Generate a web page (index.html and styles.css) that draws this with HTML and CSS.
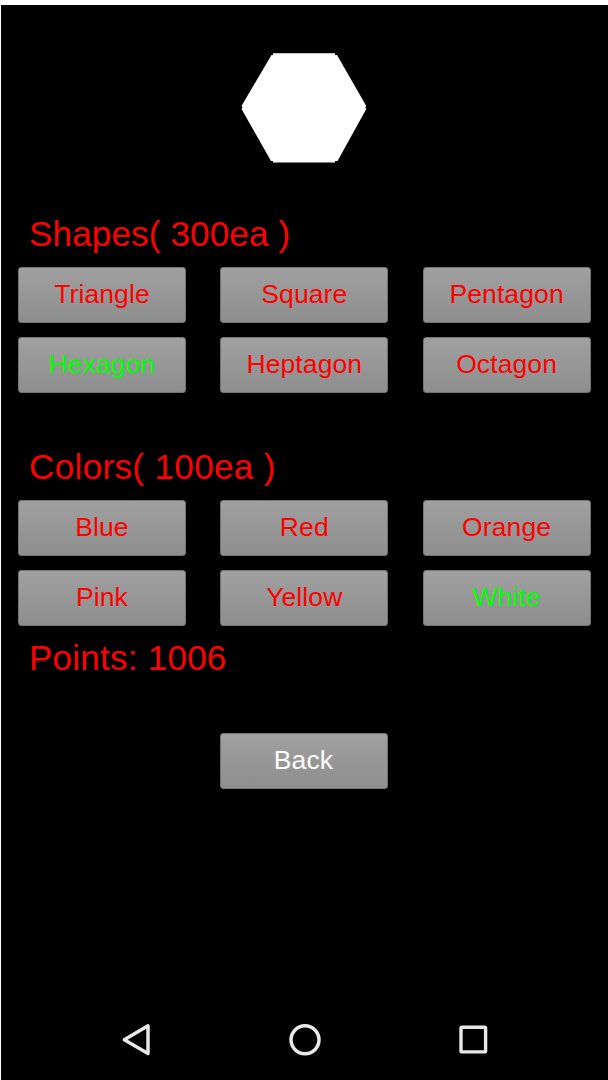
FILE: index.html
```html
<!DOCTYPE html>
<html lang="en">
<head>
<meta charset="utf-8">
<title>Shape Shop</title>
<link rel="stylesheet" href="styles.css">
</head>
<body>
<div class="screen">
  <div class="preview">
    <svg width="126" height="110" viewBox="0 0 126 110" aria-hidden="true"><path fill="#fff" d="M32 .2H94V2H96L125.300 53L124.300 54.500L125.300 56L96.500 108H94V109.500H32V108H30L.5 56L1.500 54.500L.5 53L30.500 2H32Z"/></svg>
  </div>
  <h2 class="label shapes">Shapes( 300ea )</h2>
  <div class="options">
    <button class="btn">Triangle</button>
    <button class="btn">Square</button>
    <button class="btn">Pentagon</button>
    <button class="btn selected">Hexagon</button>
    <button class="btn">Heptagon</button>
    <button class="btn">Octagon</button>
  </div>
  <h2 class="label colors">Colors( 100ea )</h2>
  <div class="options">
    <button class="btn">Blue</button>
    <button class="btn">Red</button>
    <button class="btn">Orange</button>
    <button class="btn">Pink</button>
    <button class="btn">Yellow</button>
    <button class="btn selected">White</button>
  </div>
  <h2 class="label points">Points: 1006</h2>
  <div class="actions"><button class="btn back">Back</button></div>
  <nav class="navbar">
    <svg width="60" height="50" viewBox="0 0 60 50"><path d="M14.300 24.800L38 10.800V38.500Z" fill="none" stroke="#e8e8e8" stroke-width="3.500" stroke-linejoin="round"/></svg>
    <svg width="60" height="50" viewBox="0 0 60 50"><circle cx="26" cy="24.800" r="14" fill="none" stroke="#e8e8e8" stroke-width="3.500"/></svg>
    <svg width="60" height="50" viewBox="0 0 60 50"><rect x="14" y="12.300" width="24.600" height="24.600" rx="1" fill="none" stroke="#e8e8e8" stroke-width="3.400"/></svg>
  </nav>
</div>
</body>
</html>
```
FILE: styles.css
```css
* { box-sizing: border-box; }
body {
  margin: 0;
  padding: 5px 0 0 1px;
  background: #fff;
  font-family: "Liberation Sans", Arial, sans-serif;
}
.screen {
  display: flex;
  flex-direction: column;
  height: 1075px;
  background: #000;
}
.preview {
  display: flex;
  justify-content: center;
  height: 209px;
  padding: 48px 1px 0 0;
}
.label {
  height: 40px;
  margin: 0 0 13px;
  padding-left: 28px;
  color: #f00;
  font-size: 35px;
  font-weight: 400;
  line-height: 40px;
  letter-spacing: 0.25px;
  white-space: pre;
}
.options {
  display: grid;
  grid-template-columns: repeat(3, 168px);
  column-gap: 34.3px;
  row-gap: 14px;
  padding-left: 17px;
}
.btn {
  width: 168px;
  height: 56px;
  padding: 0 0 3px;
  border: 1px solid #747474;
  border-radius: 3px;
  background: linear-gradient(#a0a0a0, #8e8e8e);
  color: #f00;
  font-family: inherit;
  font-size: 26.5px;
  line-height: 30px;
  letter-spacing: 0.1px;
}
.btn.selected { color: #0f0; }
.btn.back { color: #fff; }
.label.shapes { letter-spacing: 0.17px; }
.label.colors { margin-top: 54px; letter-spacing: 0.37px; }
.label.points { margin: 12px 0 0; }
.actions {
  display: flex;
  justify-content: center;
  padding: 55px 2px 0 0;
}
.navbar {
  display: flex;
  gap: 108.500px;
  margin-top: auto;
  padding: 0 0 15px 109px;
}
```
